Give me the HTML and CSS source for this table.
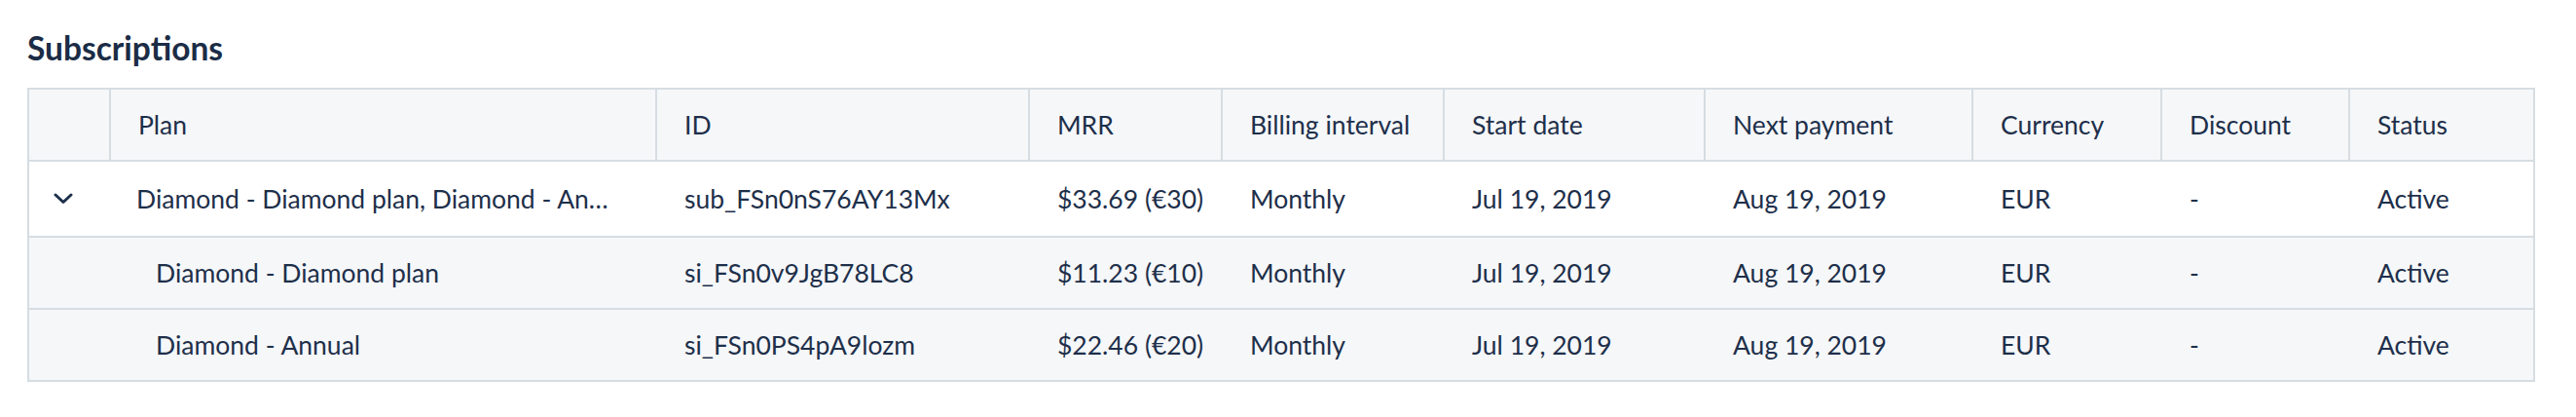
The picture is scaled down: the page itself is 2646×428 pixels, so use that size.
FILE: index.html
```html
<!DOCTYPE html>
<html lang="en">
<head>
<meta charset="utf-8">
<title>Subscriptions</title>
<link rel="stylesheet" href="styles.css">
</head>
<body>
<section class="section">
  <h2 class="title">Subscriptions</h2>
  <div class="table">
    <div class="row head">
      <div class="cell first"></div>
      <div class="cell">Plan</div>
      <div class="cell">ID</div>
      <div class="cell">MRR</div>
      <div class="cell">Billing interval</div>
      <div class="cell">Start date</div>
      <div class="cell">Next payment</div>
      <div class="cell">Currency</div>
      <div class="cell">Discount</div>
      <div class="cell">Status</div>
    </div>
    <div class="row parent">
      <div class="cell first toggle">
        <svg class="chev" width="20" height="12" viewBox="0 0 20 12" aria-hidden="true"><polyline points="2,2 10,9.5 18,2" fill="none" stroke="#1d2f4b" stroke-width="3" stroke-linecap="round" stroke-linejoin="round"/></svg>
      </div>
      <div class="cell trunc">Diamond - Diamond plan, Diamond - An…</div>
      <div class="cell">sub_FSn0nS76AY13Mx</div>
      <div class="cell">$33.69 (€30)</div>
      <div class="cell">Monthly</div>
      <div class="cell">Jul 19, 2019</div>
      <div class="cell">Aug 19, 2019</div>
      <div class="cell">EUR</div>
      <div class="cell">-</div>
      <div class="cell">Active</div>
    </div>
    <div class="row child">
      <div class="cell first"></div>
      <div class="cell sub">Diamond - Diamond plan</div>
      <div class="cell">si_FSn0v9JgB78LC8</div>
      <div class="cell">$11.23 (€10)</div>
      <div class="cell">Monthly</div>
      <div class="cell">Jul 19, 2019</div>
      <div class="cell">Aug 19, 2019</div>
      <div class="cell">EUR</div>
      <div class="cell">-</div>
      <div class="cell">Active</div>
    </div>
    <div class="row child last">
      <div class="cell first"></div>
      <div class="cell sub">Diamond - Annual</div>
      <div class="cell">si_FSn0PS4pA9lozm</div>
      <div class="cell">$22.46 (€20)</div>
      <div class="cell">Monthly</div>
      <div class="cell">Jul 19, 2019</div>
      <div class="cell">Aug 19, 2019</div>
      <div class="cell">EUR</div>
      <div class="cell">-</div>
      <div class="cell">Active</div>
    </div>
  </div>
</section>
</body>
</html>
```

FILE: styles.css
```css
html, body {
  margin: 0;
  padding: 0;
  background: #ffffff;
}

body {
  font-family: Lato, "Noto Sans", sans-serif;
  color: #1e2f4a;
}

.section {
  padding: 29px 42px 0 28px;
}

.title {
  margin: 0 0 21px 0;
  font-size: 33.5px;
  line-height: 40px;
  font-weight: 700;
  color: #1b2c46;
}

.table {
  width: 2576px;
  box-sizing: border-box;
  border: 2px solid #d6dde2;
}

.row {
  display: grid;
  grid-template-columns: 82px 561px 383px 198px 228px 268px 275px 194px 193px 190px;
  border-bottom: 2px solid #d6dde2;
  font-size: 26.5px;
}

.row.last {
  border-bottom: none;
}

.head {
  background: #f5f7f9;
  height: 72px;
}

.parent {
  background: #ffffff;
  height: 76px;
}

.child {
  background: #f5f7f9;
  height: 72px;
}

.cell {
  display: flex;
  align-items: center;
  box-sizing: border-box;
  padding: 0 20px 0 28px;
  border-left: 2px solid transparent;
  white-space: nowrap;
  overflow: hidden;
  min-width: 0;
}

.head .cell {
  border-left-color: #d6dde2;
}

.cell.first {
  border-left: none;
  padding: 0;
}

.toggle {
  padding-left: 25px !important;
}

.chev {
  display: block;
}

.trunc {
  padding-left: 26px;
  text-overflow: ellipsis;
}

.sub {
  padding-left: 46px;
}
```
